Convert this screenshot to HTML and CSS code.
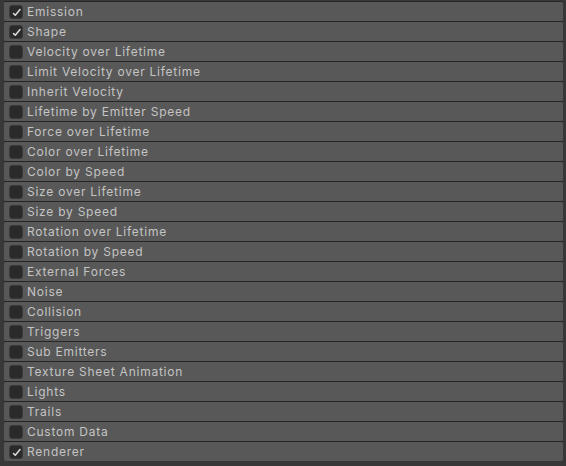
FILE: index.html
```html
<!DOCTYPE html>
<html>
<head>
<meta charset="utf-8">
<link rel="stylesheet" href="styles.css">
</head>
<body>
<div class="modules">
  <div class="row"><span class="cb on"><svg viewBox="0 0 14 14"><path d="M4.6 8.6 L6.3 10.2 L11 4.6"/></svg></span><span class="label">Emission</span></div>
  <div class="row"><span class="cb on"><svg viewBox="0 0 14 14"><path d="M4.6 8.6 L6.3 10.2 L11 4.6"/></svg></span><span class="label">Shape</span></div>
  <div class="row"><span class="cb"></span><span class="label">Velocity over Lifetime</span></div>
  <div class="row"><span class="cb"></span><span class="label">Limit Velocity over Lifetime</span></div>
  <div class="row"><span class="cb"></span><span class="label">Inherit Velocity</span></div>
  <div class="row"><span class="cb"></span><span class="label">Lifetime by Emitter Speed</span></div>
  <div class="row"><span class="cb"></span><span class="label">Force over Lifetime</span></div>
  <div class="row"><span class="cb"></span><span class="label">Color over Lifetime</span></div>
  <div class="row"><span class="cb"></span><span class="label">Color by Speed</span></div>
  <div class="row"><span class="cb"></span><span class="label">Size over Lifetime</span></div>
  <div class="row"><span class="cb"></span><span class="label">Size by Speed</span></div>
  <div class="row"><span class="cb"></span><span class="label">Rotation over Lifetime</span></div>
  <div class="row"><span class="cb"></span><span class="label">Rotation by Speed</span></div>
  <div class="row"><span class="cb"></span><span class="label">External Forces</span></div>
  <div class="row"><span class="cb"></span><span class="label">Noise</span></div>
  <div class="row"><span class="cb"></span><span class="label">Collision</span></div>
  <div class="row"><span class="cb"></span><span class="label">Triggers</span></div>
  <div class="row"><span class="cb"></span><span class="label">Sub Emitters</span></div>
  <div class="row"><span class="cb"></span><span class="label">Texture Sheet Animation</span></div>
  <div class="row"><span class="cb"></span><span class="label">Lights</span></div>
  <div class="row"><span class="cb"></span><span class="label">Trails</span></div>
  <div class="row"><span class="cb"></span><span class="label">Custom Data</span></div>
  <div class="row"><span class="cb on"><svg viewBox="0 0 14 14"><path d="M4.6 8.6 L6.3 10.2 L11 4.6"/></svg></span><span class="label">Renderer</span></div>
</div>
</body>
</html>
```
FILE: styles.css
```css
html, body {
  margin: 0;
  padding: 0;
  background: #383838;
  width: 566px;
  height: 466px;
  overflow: hidden;
}
.modules {
  padding: 1px 3px 0 4px;
  display: flex;
  flex-direction: column;
}
.row {
  height: 19px;
  border-top: 1px solid #262626;
  background: #585858;
  display: flex;
  align-items: center;
  gap: 4px;
  padding-left: 5px;
  border-radius: 2px;
}
.cb {
  width: 14px;
  height: 14px;
  box-sizing: border-box;
  background: #2a2a2a;
  border: 1px solid #3a3a3a;
  border-radius: 3px;
  display: flex;
  align-items: center;
  justify-content: center;
}
.cb svg {
  width: 14px;
  height: 14px;
  flex: none;
}
.cb svg path {
  fill: none;
  stroke: #dcdcdc;
  stroke-width: 1.5;
  stroke-linecap: round;
  stroke-linejoin: round;
}
.label {
  font-family: Inter, "Noto Sans", sans-serif;
  font-size: 12px;
  color: #c4c4c4;
  letter-spacing: 0.75px;
}
```
